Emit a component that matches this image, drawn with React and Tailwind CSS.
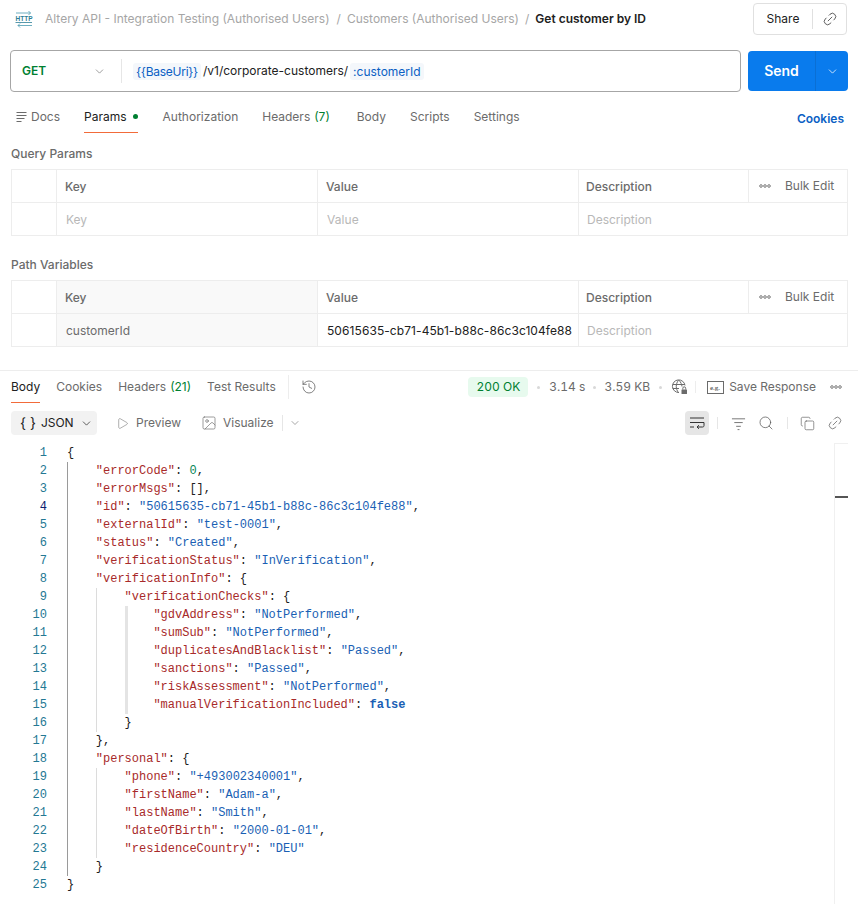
import React from "react";
import { ChevronDown, Link2, Search, Copy, History, Play, Image as ImageIcon } from "lucide-react";

const sans = { fontFamily: "Inter, 'Liberation Sans', sans-serif" };

function HttpIcon() {
  return (
    <svg width="18" height="18" viewBox="0 0 18 18" fill="none" className="shrink-0">
      <path d="M1 3H15.5M15.5 3L13.5 1M15.5 3L13.5 5" stroke="#4a9bb0" strokeWidth="0.8" />
      <path d="M17 15.5H3M3 15.5L5 13.5M3 15.5L5 17.5" stroke="#4a9bb0" strokeWidth="0.8" />
      <text x="0.5" y="11" fontSize="6.5" fontWeight="600" fill="#2f7f96" style={{ fontFamily: "'Liberation Sans', sans-serif" }}>HTTP</text>
      <path d="M0.5 12.5H17" stroke="#2f7f96" strokeWidth="0.8" />
    </svg>
  );
}

function WrapIcon() {
  return (
    <svg width="16" height="16" viewBox="0 0 16 16" fill="none" stroke="#333" strokeWidth="1">
      <path d="M1 3H15M1 7.5H15M1 12H5" />
      <path d="M15 7.5V10.5C15 11.5 14.5 12 13.5 12H8M8 12L10 10.2M8 12L10 13.8" />
    </svg>
  );
}

function FilterIcon() {
  return (
    <svg width="15" height="15" viewBox="0 0 16 16" fill="none" stroke="#707070" strokeWidth="1">
      <path d="M1 3H15M3.5 7H12.5M5.5 11H10.5M7 14.5H9" />
    </svg>
  );
}

function DocsIcon() {
  return (
    <svg width="12" height="12" viewBox="0 0 12 12" fill="none" stroke="#6b6b6b" strokeWidth="1">
      <path d="M0.5 1.5H10.5M0.5 4.5H10.5M0.5 7.5H8.5M0.5 10.5H5.5" />
    </svg>
  );
}

function GlobeLock() {
  return (
    <svg width="17" height="16" viewBox="0 0 17 16" fill="none" stroke="#6b6b6b" strokeWidth="1">
      <path d="M8 13.5A6.3 6.3 0 1 1 14 6.5" />
      <path d="M1.8 5.5H14M1.8 9.5H8M7.5 1.2C4.5 5 4.5 10 7.5 13.6M8 1.2C10 3.5 10.8 5.5 11 7.5" />
      <rect x="10.5" y="10.5" width="5.5" height="4.5" rx="0.5" fill="#6b6b6b" stroke="none" />
      <path d="M11.8 10.5V9.3A1.4 1.4 0 0 1 14.7 9.3V10.5" />
    </svg>
  );
}

function EgIcon() {
  return (
    <svg width="17" height="13" viewBox="0 0 17 13" fill="none">
      <rect x="0.5" y="0.5" width="16" height="12" stroke="#6b6b6b" strokeWidth="1" />
      <text x="3" y="9" fontSize="7" fontWeight="700" fill="#6b6b6b" style={{ fontFamily: "'Liberation Serif', serif" }}>e.g.</text>
    </svg>
  );
}

function Dots({ wide }) {
  return (
    <svg width={wide ? 14 : 12} height="4" viewBox="0 0 12 4" fill="none" stroke="#6b6b6b" strokeWidth="0.9">
      <circle cx="2" cy="2" r="1.3" />
      <circle cx="6" cy="2" r="1.3" />
      <circle cx="10" cy="2" r="1.3" />
    </svg>
  );
}

function ParamTable({ shaded, keyVal, valueVal }) {
  const line = "border-[#ededed]";
  return (
    <div className={`mx-[11px] grid grid-cols-[45px_261px_261px_170px_99px] border-t border-l ${line} w-[837px] text-xs`}>
      <div className={`border-r border-b ${line} h-[33px]`} />
      <div className={`border-r border-b ${line} h-[33px] flex items-center pl-[8px] pt-px font-medium text-[#6b6b6b] ${shaded ? "bg-[#f9f9f9]" : ""}`}>Key</div>
      <div className={`border-r border-b ${line} h-[33px] flex items-center pl-[8px] pt-px font-medium text-[#6b6b6b]`}>Value</div>
      <div className={`border-r border-b ${line} h-[33px] flex items-center pl-[7px] pt-px font-medium text-[#6b6b6b]`}>Description</div>
      <div className={`border-r border-b ${line} h-[33px] flex items-center pl-[10px] text-[#6b6b6b]`}>
        <Dots />
        <span className="ml-[14px]">Bulk Edit</span>
      </div>
      <div className={`border-r border-b ${line} h-[33px]`} />
      <div className={`border-r border-b ${line} h-[33px] flex items-center pl-[9px] pt-px ${shaded ? "bg-[#f9f9f9] text-[#6b6b6b]" : "text-[#b8b8b8]"}`}>{keyVal}</div>
      <div className={`border-r border-b ${line} h-[33px] flex items-center pl-[9px] pt-px tracking-[0.08px] whitespace-nowrap ${valueVal === "Value" ? "text-[#b8b8b8]" : "text-[#212121]"}`}>{valueVal}</div>
      <div className={`col-span-2 border-r border-b ${line} h-[33px] flex items-center pl-[8px] pt-px text-[#b8b8b8]`}>Description</div>
    </div>
  );
}

const K = ({ c }) => <span className="text-[#a82a2a]">{c}</span>;
const S = ({ c }) => <span className="text-[#1a5fb4]">{c}</span>;
const P = ({ c }) => <span className="text-[#212121]">{c}</span>;

const kv = (k, v, comma) => (
  <>
    <K c={`"${k}"`} />
    <P c=": " />
    <S c={`"${v}"`} />
    {comma ? <P c="," /> : null}
  </>
);
const ko = (k) => (
  <>
    <K c={`"${k}"`} />
    <P c=": {" />
  </>
);

const D = "border-[#9a9a9a]";
const L = "border-[#dcdcdc]";
const T = "border-[#e4e4e4] border-l-[3px]";
const lines = [
  [0, <P c="{" />],
  [1, <><K c={'"errorCode"'} /><P c=": " /><span className="text-[#098658]">0</span><P c="," /></>],
  [1, <><K c={'"errorMsgs"'} /><P c=": []," /></>],
  [1, kv("id", "50615635-cb71-45b1-b88c-86c3c104fe88", true)],
  [1, kv("externalId", "test-0001", true)],
  [1, kv("status", "Created", true)],
  [1, kv("verificationStatus", "InVerification", true)],
  [1, ko("verificationInfo")],
  [2, ko("verificationChecks")],
  [3, kv("gdvAddress", "NotPerformed", true)],
  [3, kv("sumSub", "NotPerformed", true)],
  [3, kv("duplicatesAndBlacklist", "Passed", true)],
  [3, kv("sanctions", "Passed", true)],
  [3, kv("riskAssessment", "NotPerformed", true)],
  [3, <><K c={'"manualVerificationIncluded"'} /><P c=": " /><span className="font-bold text-[#1a5fb4]">false</span></>],
  [2, <P c="}" />],
  [1, <P c="}," />],
  [1, ko("personal")],
  [2, kv("phone", "+493002340001", true)],
  [2, kv("firstName", "Adam-a", true)],
  [2, kv("lastName", "Smith", true)],
  [2, kv("dateOfBirth", "2000-01-01", true)],
  [2, kv("residenceCountry", "DEU", false)],
  [1, <P c="}" />],
  [0, <P c="}" />],
];

function guideFor(i, level) {
  const n = i + 1;
  if (level === 0) return n >= 2 && n <= 24;
  if (level === 1) return (n >= 9 && n <= 16) || (n >= 19 && n <= 23);
  if (level === 2) return n >= 10 && n <= 15;
  return false;
}

function Code() {
  return (
    <div className="flex-1 min-w-0 pt-[1px] text-xs leading-[18px]" style={{ fontFamily: "'Liberation Mono', monospace" }}>
      {lines.map(([depth, content], i) => (
        <div key={i} className="flex h-[18px] whitespace-pre">
          <div className={`w-[36px] shrink-0 text-right ${i === 3 ? "text-[#0b216f]" : "text-[#237893]"}`}>{i + 1}</div>
          <div className="w-[20px] shrink-0" />
          {[0, 1, 2].map((lv) =>
            lv < depth ? (
              <div key={lv} className={`w-[28.8px] h-[18px] shrink-0 ${guideFor(i, lv) ? `border-l ${lv === 0 ? D : lv === 1 ? L : T}` : ""}`} />
            ) : null
          )}
          <div>{content}</div>
        </div>
      ))}
    </div>
  );
}

function Tab({ children, active, className = "" }) {
  return (
    <div className={`relative flex items-center h-full ${active ? "text-[#212121]" : "text-[#6b6b6b]"} ${className}`}>
      {children}
      {active ? <div className="absolute left-0 right-0 bottom-0 h-px bg-[#f26b3a]" /> : null}
    </div>
  );
}

const Sep = () => <div className="w-[3px] h-[3px] rounded-full bg-[#d8d8d8]" />;

export default function App() {
  return (
    <div className="w-[858px] h-[904px] overflow-hidden bg-white text-xs" style={sans}>
      {/* header */}
      <div className="h-[38px] pr-[11px] pl-[15px] flex items-center">
        <HttpIcon />
        <div className="ml-[12px] flex-1 text-[#a6a6a6] whitespace-nowrap">
          Altery API - Integration Testing (Authorised Users)
          <span className="ml-[7px] mr-[6px]">/</span>
          Customers (Authorised Users)
          <span className="mx-[6px]">/</span>
          <span className="font-semibold text-[#212121]">Get customer by ID</span>
        </div>
        <div className="w-[94px] h-[32px] border border-[#e0e0e0] rounded-[4px] flex items-center">
          <div className="w-[58px] text-center text-[#212121]">Share</div>
          <div className="w-px h-[20px] bg-[#e0e0e0]" />
          <div className="flex-1 flex justify-center"><Link2 size={16} strokeWidth={1.1} className="text-[#333] -rotate-45" /></div>
        </div>
      </div>

      {/* url bar */}
      <div className="mt-[12px] ml-[10px] flex gap-[7px]">
        <div className="w-[731px] h-[42px] border border-[#a6a6a6] rounded-[4px] flex items-center">
          <span className="ml-[11px] w-[71px] font-semibold text-[#007f31]">GET</span>
          <ChevronDown size={13} strokeWidth={1.2} className="text-[#6b6b6b]" />
          <div className="ml-[15px] w-px h-[24px] bg-[#e6e6e6]" />
          <div className="ml-[11px] flex items-center text-[#212121] whitespace-nowrap">
            <span className="px-[3px] h-[17px] leading-[17px] bg-[#f4f7fb] rounded-[3px] text-[#0b5fc4] tracking-[-0.27px]">{"{{BaseUri}}"}</span>
            <span className="ml-[2px] mr-[2px]">/v1/corporate-customers/</span>
            <span className="px-[3px] h-[17px] leading-[17px] bg-[#f4f7fb] rounded-[3px] text-[#0b5fc4]">:customerId</span>
          </div>
        </div>
        <div className="w-[100px] mt-[1px] h-[40px] rounded-[4px] bg-[#097bed] flex items-center text-white">
          <div className="w-[67px] text-center text-sm font-semibold">Send</div>
          <div className="w-px h-full bg-[#0a6fd4]" />
          <div className="flex-1 flex justify-center"><ChevronDown size={13} strokeWidth={1.4} /></div>
        </div>
      </div>

      {/* request tabs */}
      <div className="mt-[8px] h-[33px] pl-[16px] pr-[14px] flex items-center">
        <Tab className="gap-[3px]"><DocsIcon /><span>Docs</span></Tab>
        <Tab active className="ml-[24px] gap-[6px]"><span>Params</span><span className="w-[5px] h-[5px] rounded-full bg-[#007f31]" /></Tab>
        <Tab className="ml-[25px]">Authorization</Tab>
        <Tab className="ml-[24px] gap-[4px]"><span>Headers</span><span className="text-[#007f31]">(7)</span></Tab>
        <Tab className="ml-[27px]">Body</Tab>
        <Tab className="ml-[24px]">Scripts</Tab>
        <Tab className="ml-[24px]">Settings</Tab>
        <div className="ml-auto mt-[4px] font-semibold text-[#0b5fc4]">Cookies</div>
      </div>

      {/* query params */}
      <div className="mt-[13px] ml-[11px] h-[16px] leading-[16px] font-medium text-[#6b6b6b]">Query Params</div>
      <div className="mt-[7px]"><ParamTable keyVal="Key" valueVal="Value" /></div>

      {/* path variables */}
      <div className="mt-[21px] ml-[11px] h-[16px] leading-[16px] font-medium text-[#6b6b6b]">Path Variables</div>
      <div className="mt-[7px]"><ParamTable shaded keyVal="customerId" valueVal="50615635-cb71-45b1-b88c-86c3c104fe88" /></div>

      {/* response */}
      <div className="mt-[23px] border-t border-[#ededed]">
        <div className="h-[32px] pl-[11px] pr-[15px] flex items-center">
          <Tab active>Body</Tab>
          <Tab className="ml-[16px]">Cookies</Tab>
          <Tab className="ml-[16px] gap-[4px]"><span>Headers</span><span className="text-[#007f31]">(21)</span></Tab>
          <Tab className="ml-[16px]">Test Results</Tab>
          <div className="ml-[12px] w-px h-[24px] bg-[#ededed]" />
          <History size={16} strokeWidth={1.1} className="ml-[12px] text-[#555]" />
          <div className="ml-auto flex items-center tabular-nums">
            <div className="h-[20px] w-[60px] text-center leading-[20px] rounded-[4px] bg-[#e7faee] text-[#007f31]">200 OK</div>
            <div className="ml-[9px]"><Sep /></div>
            <span className="ml-[9px] text-[#6b6b6b]">3.14 s</span>
            <div className="ml-[8px]"><Sep /></div>
            <span className="ml-[8px] text-[#6b6b6b]">3.59 KB</span>
            <div className="ml-[9px]"><Sep /></div>
            <div className="ml-[9px]"><GlobeLock /></div>
            <div className="ml-[7px] w-px h-[12px] bg-[#ededed]" />
            <div className="ml-[11px]"><EgIcon /></div>
            <span className="ml-[5px] text-[#6b6b6b]">Save Response</span>
            <div className="ml-[13px] flex"><Dots wide /></div>
          </div>
        </div>

        <div className="mt-[8px] h-[24px] pl-[11px] pr-[15px] flex items-center">
          <div className="w-[86px] h-[24px] rounded-[4px] bg-[#f2f2f2] flex items-center pl-[9px] text-[#212121]">
            <span className="text-sm leading-none mr-[5px]">{"{ }"}</span>
            <span>JSON</span>
            <ChevronDown size={13} strokeWidth={1.3} className="ml-[6px]" />
          </div>
          <Play size={13} strokeWidth={1} className="ml-[19px] text-[#6b6b6b]" />
          <span className="ml-[7px] text-[#6b6b6b]">Preview</span>
          <ImageIcon size={16} strokeWidth={1} className="ml-[20px] text-[#6b6b6b]" />
          <span className="ml-[6px] text-[#6b6b6b]">Visualize</span>
          <div className="ml-[8px] w-px h-[16px] bg-[#e6e6e6]" />
          <ChevronDown size={12} strokeWidth={1.2} className="ml-[6px] text-[#6b6b6b]" />
          <div className="ml-auto flex items-center">
            <div className="w-[24px] h-[24px] rounded-[4px] bg-[#e6e6e6] flex items-center justify-center"><WrapIcon /></div>
            <div className="ml-[8px] w-px h-[12px] bg-[#e6e6e6]" />
            <div className="ml-[13px]"><FilterIcon /></div>
            <Search size={16} strokeWidth={1.1} className="ml-[12px] text-[#555]" />
            <div className="ml-[13px] w-px h-[12px] bg-[#e6e6e6]" />
            <Copy size={15} strokeWidth={1} className="ml-[12px] text-[#555]" />
            <Link2 size={16} strokeWidth={1} className="ml-[12px] text-[#555] -rotate-45" />
          </div>
        </div>

        <div className="mt-[8px] flex pl-[11px]">
          <Code />
          <div className="relative w-[14px] mr-[10px] h-[461px] border-l border-t border-[#f0f0f0]">
            <div className="absolute left-0 right-0 top-[52px] h-[2px] bg-[#555]" />
          </div>
        </div>
      </div>
    </div>
  );
}
